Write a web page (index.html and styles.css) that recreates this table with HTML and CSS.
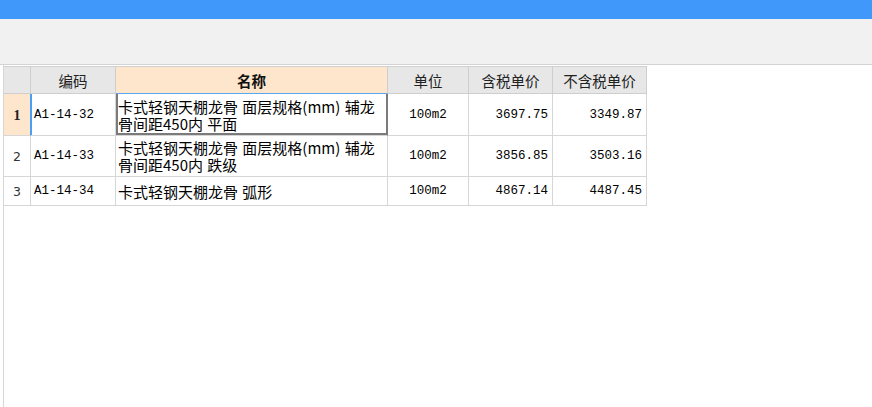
FILE: index.html
```html
<!DOCTYPE html>
<html lang="zh">
<head>
<meta charset="utf-8">
<link rel="stylesheet" href="styles.css">
</head>
<body>
<div class="titlebar"></div>
<div class="toolbar"></div>
<div class="main">
  <div class="pane">
    <table class="grid">
      <thead>
        <tr>
          <th class="c-num"></th>
          <th class="c-code">编码</th>
          <th class="c-name active">名称</th>
          <th class="c-unit">单位</th>
          <th class="c-tax">含税单价</th>
          <th class="c-notax">不含税单价</th>
        </tr>
      </thead>
      <tbody>
        <tr class="r-two sel">
          <td class="num cur">1</td>
          <td class="code first">A1-14-32</td>
          <td class="name focus">卡式轻钢天棚龙骨 面层规格(mm) 辅龙<br>骨间距450内 平面</td>
          <td class="unit">100m2</td>
          <td class="price">3697.75</td>
          <td class="price">3349.87</td>
        </tr>
        <tr class="r-two">
          <td class="num">2</td>
          <td class="code">A1-14-33</td>
          <td class="name">卡式轻钢天棚龙骨 面层规格(mm) 辅龙<br>骨间距450内 跌级</td>
          <td class="unit">100m2</td>
          <td class="price">3856.85</td>
          <td class="price">3503.16</td>
        </tr>
        <tr class="r-one">
          <td class="num">3</td>
          <td class="code">A1-14-34</td>
          <td class="name">卡式轻钢天棚龙骨 弧形</td>
          <td class="unit">100m2</td>
          <td class="price">4867.14</td>
          <td class="price">4487.45</td>
        </tr>
      </tbody>
    </table>
  </div>
</div>
</body>
</html>
```
FILE: styles.css
```css
html, body {
  margin: 0;
  padding: 0;
  background: #ffffff;
}
body {
  width: 872px;
  height: 407px;
  overflow: hidden;
  font-family: "Noto Sans CJK SC", "Noto Sans", sans-serif;
  color: #222;
  display: flex;
  flex-direction: column;
}
.titlebar {
  height: 19px;
  background: #4098fa;
  flex: none;
}
.toolbar {
  height: 45px;
  background: #f1f1f1;
  border-bottom: 1px solid #d3d3d3;
  flex: none;
}
.main {
  flex: 1;
  padding-left: 3px;
  display: flex;
}
.pane {
  flex: 1;
  border-left: 1px solid #d6d6d6;
  padding-top: 1px;
}
.grid {
  border-collapse: separate;
  border-spacing: 0;
  table-layout: fixed;
  width: 643px;
  border-top: 1px solid #d0d0d0;
}
.grid th, .grid td {
  box-sizing: border-box;
  border-right: 1px solid #d6d6d6;
  border-bottom: 1px solid #d6d6d6;
  padding: 0;
  overflow: hidden;
  white-space: nowrap;
}
.grid th {
  height: 27px;
  background: #e7e7e7;
  font-size: 14.5px;
  font-weight: normal;
  color: #222;
  text-align: center;
  border-color: #cecece;
}
.grid th.active {
  background: #fde6cb;
  font-weight: bold;
  color: #111;
  border-bottom-color: #5aa6f2;
}
.c-num { width: 27px; }
.c-code { width: 85px; }
.c-name { width: 272px; }
.c-unit { width: 81px; }
.c-tax { width: 84px; }
.c-notax { width: 94px; }

.r-two td { height: 41px; }
.r-two.sel td { height: 42px; }
.r-one td { height: 29px; }

.num {
  text-align: center;
  font-family: "DejaVu Sans", sans-serif;
  font-size: 12.5px;
  color: #333;
  background: #ffffff;
}
.num.cur {
  background: #fde6cb;
  font-family: "Liberation Serif", serif;
  font-weight: bold;
  font-size: 14px;
  color: #222;
  padding-top: 3px;
}
.code {
  font-family: "Liberation Mono", monospace;
  font-size: 12.5px;
  padding-left: 3px !important;
  color: #000;
}
.code.first {
  box-shadow: inset 1px 0 0 #4a9ff5;
}
.grid td.num.cur {
  border-right-color: #4a9ff5;
}
.name {
  font-size: 15px;
  line-height: 17px;
  padding-left: 2px !important;
  color: #000;
  white-space: normal;
  word-spacing: 1px;
}
.name.focus {
  box-shadow: inset 2px 0 0 #7b7b7b, inset -1px 0 0 #7b7b7b, inset 0 -2px 0 #7b7b7b;
  padding-left: 2px !important;
}
.grid td.name.focus {
  border-right-color: #7b7b7b;
}
.unit {
  text-align: center;
  font-family: "Liberation Mono", monospace;
  font-size: 12.5px;
  color: #000;
}
.price {
  text-align: right;
  font-family: "Liberation Mono", monospace;
  font-size: 12.5px;
  padding-right: 4px !important;
  color: #000;
}
```
